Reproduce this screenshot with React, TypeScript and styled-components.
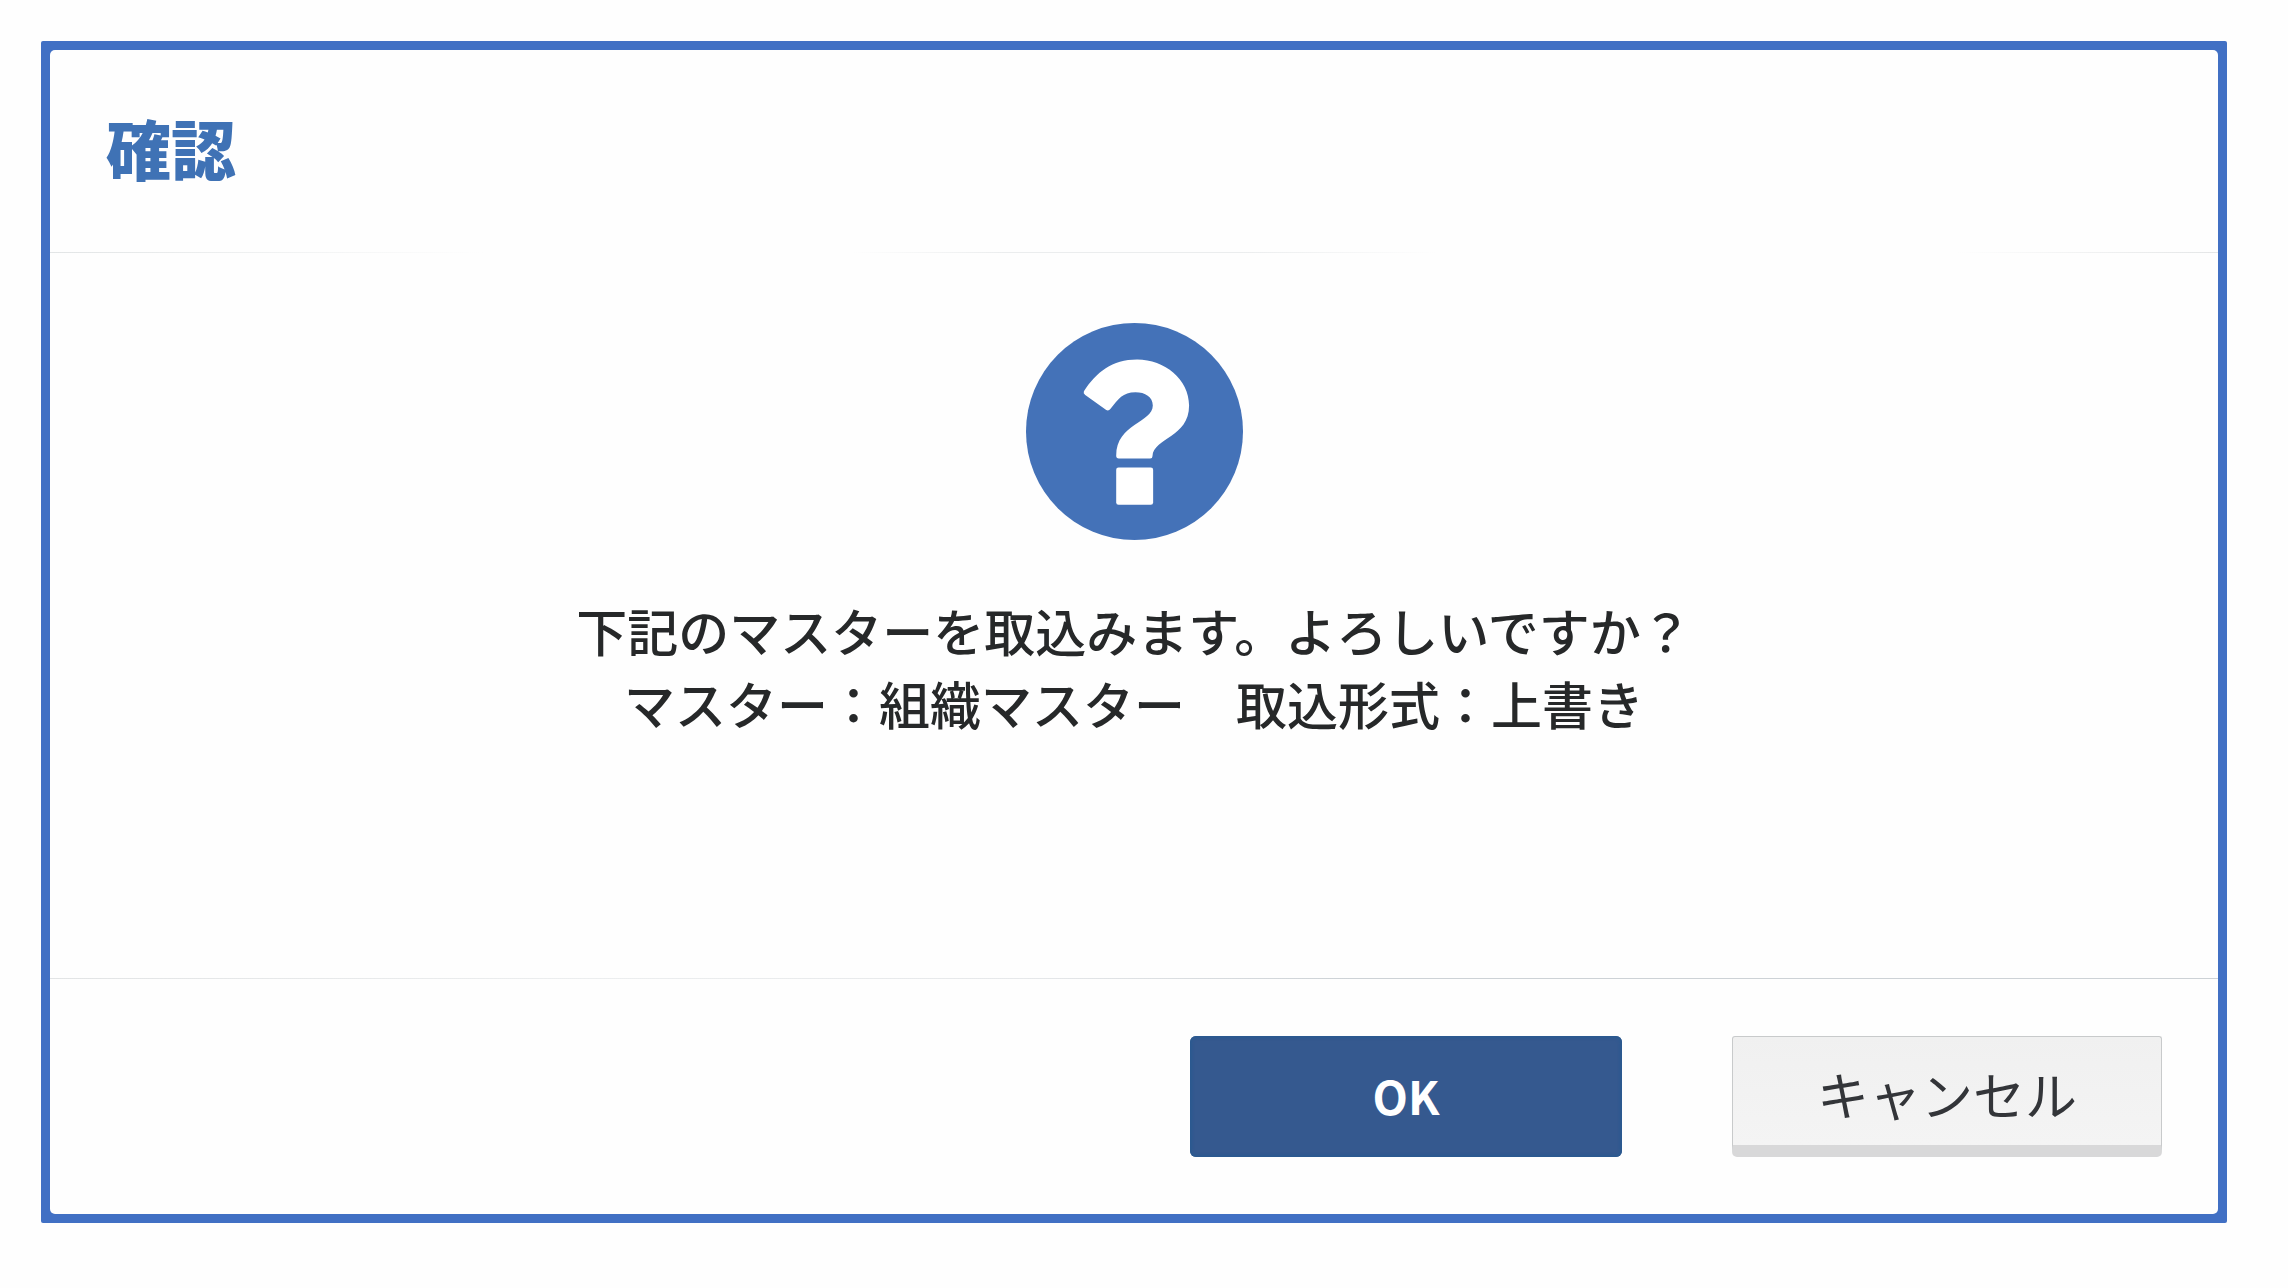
import React from "react";
import styled, { createGlobalStyle } from "styled-components";

const GlobalStyle = createGlobalStyle`
  * { box-sizing: border-box; }
  body {
    margin: 0;
    background: #fefefe;
    font-family: "Noto Sans CJK JP", "Noto Sans", sans-serif;
    color: #262829;
  }
`;

const Page = styled.main`
  padding: 41px 61px 66px 41px;
`;

const Dialog = styled.section`
  background: #4170c4;
  border-radius: 2px;
  padding: 9px;
`;

const Surface = styled.div`
  display: flex;
  flex-direction: column;
  background: #fefefe;
  border-radius: 5px;
`;

const Header = styled.header`
  padding: 52px 56px 60px;
`;

const Title = styled.h1`
  margin: 0;
  font-size: 65px;
  line-height: 90px;
  font-weight: 900;
  color: #3f72b5;
`;

const Rule = styled.hr<{ $faint?: boolean }>`
  width: 100%;
  height: 1px;
  margin: 0;
  border: 0;
  background: ${({ $faint }) =>
    $faint
      ? "linear-gradient(90deg, #e2e5e6, #fefefe 20%, #fefefe 37%, #ebedee 44%, #ebedee 55%, #fefefe 64%, #fefefe 88%, #e4e6e7)"
      : "linear-gradient(90deg, #e2e4e5, #eceeef 25%, #e6e8ea 45%, #cdd2d6 60%, #cdd2d6)"};
`;

const Body = styled.div`
  display: flex;
  flex-direction: column;
  align-items: center;
  gap: 54px;
  min-height: 725px;
  padding: 70px 56px 56px;
`;

const QuestionIcon = styled.svg`
  display: block;
  width: 217px;
  height: 217px;
`;

const Message = styled.p`
  margin: 0;
  font-size: 51px;
  line-height: 73px;
  font-weight: 500;
  text-align: center;
`;

const Footer = styled.footer`
  display: flex;
  justify-content: flex-end;
  gap: 110px;
  padding: 57px 56px;
`;

const Button = styled.button`
  width: 432px;
  height: 121px;
  border: 0;
  border-radius: 6px;
  font-family: inherit;
  cursor: pointer;
`;

const PrimaryButton = styled(Button)`
  padding: 0 0 4px;
  background: #35598f;
  box-shadow: inset 0 0 3px 2px #2a5a90;
  color: #fff;
  font-size: 46px;
  font-weight: 700;
`;

const SecondaryButton = styled(Button)`
  width: 430px;
  padding: 4px 0 0;
  background: linear-gradient(#f0f0f0, #f4f4f4);
  border: 1px solid #c8cacb;
  border-bottom: 12px solid #d8d8d9;
  border-radius: 3px 3px 5px 5px;
  color: #333539;
  font-size: 52px;
  font-weight: 400;
`;

export default function App() {
  return (
    <>
      <GlobalStyle />
      <Page>
        <Dialog role="dialog" aria-labelledby="dialog-title" aria-describedby="dialog-message">
          <Surface>
            <Header>
              <Title id="dialog-title">確認</Title>
            </Header>
            <Rule $faint />
            <Body>
              <QuestionIcon viewBox="0 0 652 652" aria-hidden="true">
                <circle cx="326" cy="326" r="326" fill="#4472b8" />
                <path
                  fill="#fff"
                  d="M174 205C212 148 258 110 334 110C417 110 490 170 490 248C490 345 383 345 380 400Q380 407 373 407H279Q271 407 271 399C271 302 381 300 381 248C381 222 358 208 329 208C290 208 278 228 254 258Q248 266 240 261L178 216Q171 211 174 205Z"
                />
                <rect x="271" y="434" width="111" height="112" rx="7" fill="#fff" />
              </QuestionIcon>
              <Message id="dialog-message">
                下記のマスターを取込みます。よろしいですか？
                <br />
                マスター：組織マスター　取込形式：上書き
              </Message>
            </Body>
            <Rule />
            <Footer>
              <PrimaryButton type="button">OK</PrimaryButton>
              <SecondaryButton type="button">キャンセル</SecondaryButton>
            </Footer>
          </Surface>
        </Dialog>
      </Page>
    </>
  );
}
